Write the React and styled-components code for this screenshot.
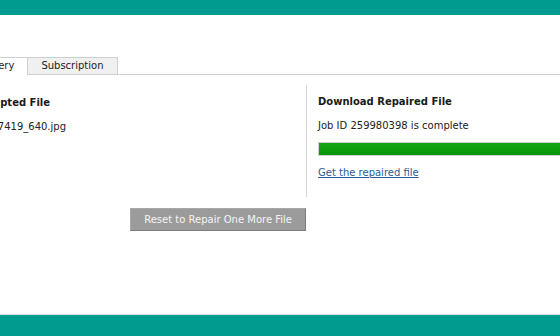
import styled, { createGlobalStyle } from "styled-components";

const GlobalStyle = createGlobalStyle`
  html, body {
    margin: 0;
    padding: 0;
    background: #ffffff;
  }
  body {
    font-family: "DejaVu Sans", Verdana, sans-serif;
    font-size: 10px;
    color: #222;
    overflow: hidden;
  }
`;

const Page = styled.div`
  width: 560px;
  height: 336px;
  display: flex;
  flex-direction: column;
  overflow: hidden;
`;

const TopBar = styled.div`
  height: 15px;
  background: #009c90;
  flex-shrink: 0;
`;

const Main = styled.div`
  flex: 1;
  padding-top: 42px;
`;

const TabRow = styled.div`
  display: flex;
  border-bottom: 1px solid #d0d0d0;
  margin-left: -46px;
  width: 606px;
`;

const Tab = styled.div`
  height: 16px;
  line-height: 16px;
  padding: 0 13px;
  border: 1px solid #cfcfcf;
  margin-bottom: -1px;
  background: ${(p) => (p.$active ? "#ffffff" : "#f0f0f0")};
  border-bottom: 1px solid ${(p) => (p.$active ? "#ffffff" : "#d0d0d0")};
  margin-left: ${(p) => (p.$active ? "0" : "-1px")};
  color: #222;
`;

const Panels = styled.div`
  display: flex;
  margin-left: -44px;
  margin-top: 10px;
`;

const LeftCol = styled.div`
  flex-shrink: 0;
  width: 350px;
  padding: 12px 0 0 13px;
  box-sizing: border-box;
`;

const RightCol = styled.div`
  flex-shrink: 0;
  width: 300px;
  border-left: 1px solid #d4d4d4;
  padding: 11px 0 0 11px;
  height: 101px;
`;

const Heading = styled.div`
  font-weight: bold;
  color: #1a1a1a;
  line-height: 12px;
`;

const Line = styled.div`
  margin-top: 12px;
  line-height: 12px;
  color: #222;
`;

const Progress = styled.div`
  margin-top: 10px;
  height: 12px;
  border: 1px solid #cfcfcf;
  background: linear-gradient(#14a514, #089608);
`;

const Link = styled.a`
  display: inline-block;
  margin-top: 11px;
  line-height: 12px;
  color: #2e5c94;
  text-decoration: underline;
  cursor: pointer;
`;

const ButtonRow = styled.div`
  display: flex;
  justify-content: flex-end;
  width: 350px;
  margin-left: -44px;
  margin-top: 11px;
`;

const Button = styled.button`
  font-family: "DejaVu Sans", Verdana, sans-serif;
  font-size: 10px;
  height: 23px;
  padding: 0 13px;
  background: #9b9b9b;
  color: #f5f5f5;
  border: 1px solid #a8a8a8;
  border-right-color: #7c7c7c;
  border-bottom-color: #7c7c7c;
  cursor: pointer;
`;

const Footer = styled.div`
  height: 21px;
  background: #009c90;
  border-top: 1px solid #d8dede;
  flex-shrink: 0;
`;

export default function App() {
  return (
    <>
      <GlobalStyle />
      <Page>
        <TopBar />
        <Main>
          <TabRow>
            <Tab $active>Recovery</Tab>
            <Tab>Subscription</Tab>
          </TabRow>
          <Panels>
            <LeftCol>
              <Heading>Corrupted File</Heading>
              <Line>img-17419_640.jpg</Line>
            </LeftCol>
            <RightCol>
              <Heading>Download Repaired File</Heading>
              <Line>Job ID 259980398 is complete</Line>
              <Progress />
              <Link>Get the repaired file</Link>
            </RightCol>
          </Panels>
          <ButtonRow>
            <Button>Reset to Repair One More File</Button>
          </ButtonRow>
        </Main>
        <Footer />
      </Page>
    </>
  );
}
